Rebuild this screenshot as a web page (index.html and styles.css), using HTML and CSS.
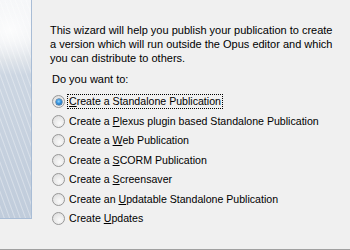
FILE: index.html
```html
<!DOCTYPE html>
<html>
<head>
<meta charset="utf-8">
<link rel="stylesheet" href="styles.css">
</head>
<body>
<div class="page">
  <div class="top">
    <div class="side"><div class="streaks"></div></div>
    <div class="main">
      <p class="intro">This wizard will help you publish your publication to create a version which will run outside the Opus editor and which you can distribute to others.</p>
      <p class="ask">Do you want to:</p>
      <div class="options">
        <label class="opt"><span class="radio on"></span><span class="lbl focus"><u>C</u>reate a Standalone Publication</span></label>
        <label class="opt"><span class="radio"></span><span class="lbl">Create a <u>P</u>lexus plugin based Standalone Publication</span></label>
        <label class="opt"><span class="radio"></span><span class="lbl">Create a <u>W</u>eb Publication</span></label>
        <label class="opt"><span class="radio"></span><span class="lbl">Create a <u>S</u>CORM Publication</span></label>
        <label class="opt"><span class="radio"></span><span class="lbl">Create a <u>S</u>creensaver</span></label>
        <label class="opt"><span class="radio"></span><span class="lbl">Create an <u>U</u>pdatable Standalone Publication</span></label>
        <label class="opt"><span class="radio"></span><span class="lbl">Create <u>U</u>pdates</span></label>
      </div>
    </div>
  </div>
</div>
</body>
</html>
```
FILE: styles.css
```css
html, body {
  margin: 0;
  padding: 0;
  background: #f0f0f0;
}
body {
  font-family: "Liberation Sans", Arial, sans-serif;
  font-size: 11px;
  color: #000;
}
.page {
  width: 350px;
  height: 249px;
  border-bottom: 1px solid #a0a0a0;
  overflow: hidden;
}
.top {
  display: flex;
}
.side {
  width: 32px;
  height: 219px;
  box-sizing: border-box;
  border-right: 1px solid #a9bdd6;
  border-bottom: 1px solid #a9bdd6;
  background:
    radial-gradient(ellipse 40px 30px at 10px 30px, rgba(255,255,255,0.8), rgba(255,255,255,0) 100%),
    linear-gradient(180deg, #f6f7f9 0px, #eef0f3 40px, #dfe4ea 60px, #ccd6e2 75px, #c5d0de 150px, #c0ccdb 219px);
  position: relative;
  overflow: hidden;
}
.streaks {
  position: absolute;
  inset: 0;
  background: repeating-linear-gradient(70deg, rgba(255,255,255,0) 0px, rgba(255,255,255,0) 3px, rgba(255,255,255,0.35) 4px, rgba(255,255,255,0) 5px);
}
.main {
  padding-left: 18px;
  flex: 1;
}
.intro {
  margin: 23px 0 0 0;
  line-height: 14px;
  width: 290px;
}
.ask {
  margin: 7px 0 0 2px;
  line-height: 14px;
}
.options {
  margin-top: 9px;
  display: flex;
  flex-direction: column;
  gap: 6px;
}
.opt {
  display: flex;
  align-items: center;
  height: 13.5px;
}
.radio {
  width: 13px;
  height: 13px;
  box-sizing: border-box;
  border-radius: 50%;
  border: 1px solid #979797;
  background: radial-gradient(circle at 60% 65%, #fafafa 0%, #e6e6e6 60%, #d4d4d4 100%);
  margin-left: 2px;
  margin-right: 2px;
  position: relative;
  flex: none;
}
.radio.on::after {
  content: "";
  position: absolute;
  left: 2.5px;
  top: 2.5px;
  width: 6px;
  height: 6px;
  border-radius: 50%;
  background: radial-gradient(circle at 45% 40%, #8fd5ff 0%, #2b8ad8 50%, #0d4f8e 100%);
  box-shadow: 0 0 0 0.5px #1d4b7a;
}
.lbl {
  padding: 0 1px;
  font-size: 10.6px;
  line-height: 13px;
  border: 1px dotted transparent;
  white-space: nowrap;
}
.lbl.focus {
  border-color: #000;
}
u {
  text-decoration: underline;
}
```
